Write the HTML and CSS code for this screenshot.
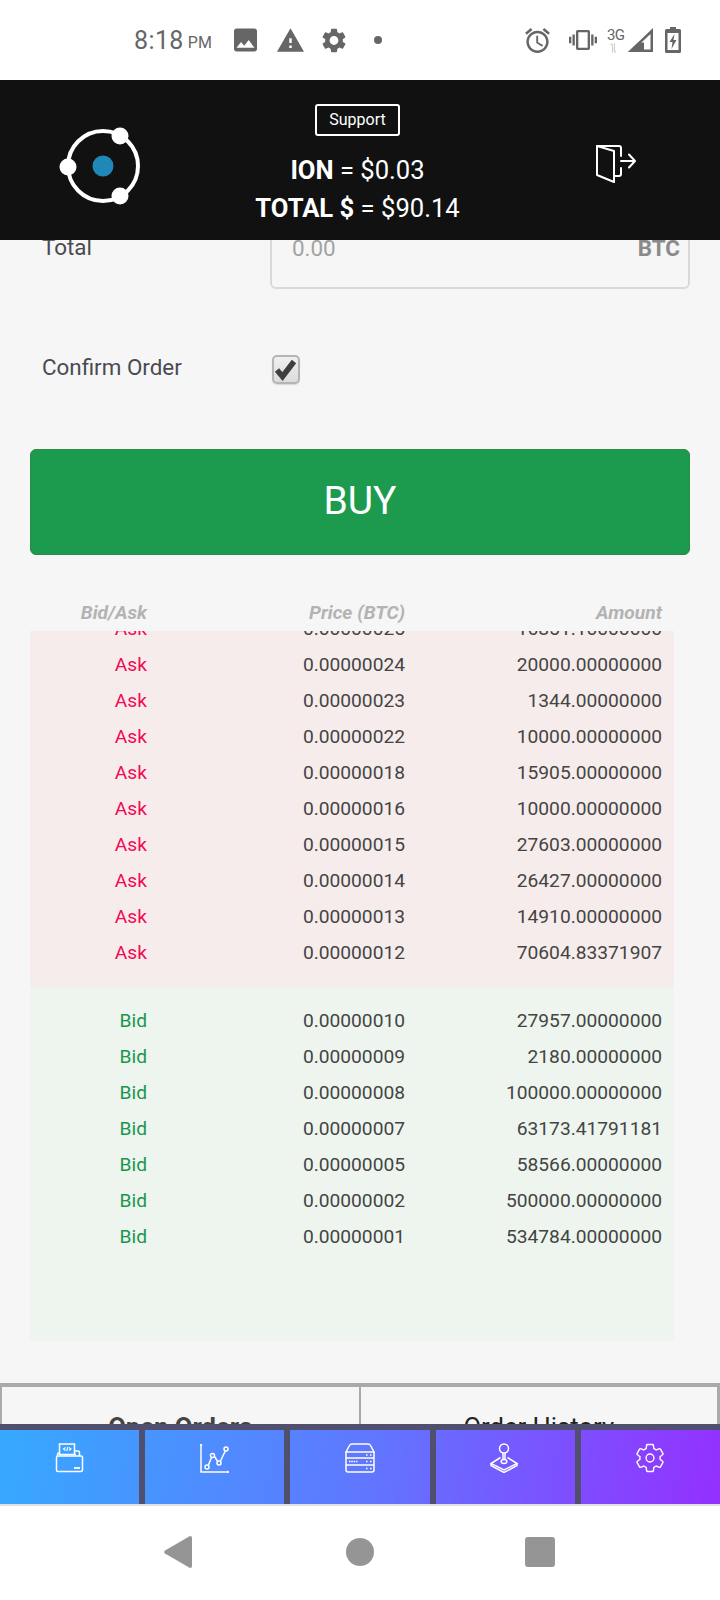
FILE: index.html
```html
<!DOCTYPE html>
<html lang="en">

<head>
    <meta charset="UTF-8" />
    <meta name="viewport" content="width=device-width, initial-scale=1.0" />
    <title>Exchange</title>
    <link rel="stylesheet" href="styles.css">
</head>

<body>
    <div id="status_bar">
        <span class="clock">8:18</span><span class="clock_suffix">PM</span>
        <svg class="st_image" viewBox="3 3 18 18"><path d="M21 19V5c0-1.100-.9-2-2-2H5c-1.100 0-2 .9-2 2v14c0 1.100.9 2 2 2h14c1.100 0 2-.9 2-2zM8.500 13.500l2.500 3.010L14.500 12l4.500 6H5l3.500-4.500z" fill-rule="evenodd"/></svg>
        <svg class="st_warn" viewBox="1 2 22 19"><path d="M1 21h22L12 2 1 21zm12-3h-2v-2h2v2zm0-4h-2v-4h2v4z"/></svg>
        <svg class="st_gear" viewBox="2.500 1.800 19 20.400"><path d="M19.140 12.940c.04-.3.06-.61.06-.94 0-.32-.02-.64-.07-.94l2.030-1.580c.18-.14.23-.41.12-.61l-1.920-3.320c-.12-.22-.37-.29-.59-.22l-2.390.96c-.5-.38-1.030-.7-1.620-.94l-.36-2.540c-.04-.24-.24-.41-.48-.41h-3.840c-.24 0-.43.17-.47.41l-.36 2.540c-.59.24-1.130.57-1.620.94l-2.390-.96c-.22-.08-.47 0-.59.22L2.740 8.870c-.12.21-.08.47.12.61l2.030 1.580c-.05.3-.09.63-.09.94s.02.64.07.94l-2.030 1.580c-.18.14-.23.41-.12.61l1.920 3.320c.12.22.37.29.59.22l2.390-.96c.5.38 1.030.7 1.620.94l.36 2.540c.05.24.24.41.48.41h3.840c.24 0 .44-.17.47-.41l.36-2.540c.59-.24 1.130-.56 1.620-.94l2.390.96c.22.08.47 0 .59-.22l1.920-3.320c.12-.22.07-.47-.12-.61l-2.010-1.580zM12 15.600c-1.980 0-3.600-1.620-3.600-3.600s1.620-3.600 3.600-3.600 3.600 1.620 3.600 3.600-1.620 3.600-3.600 3.600z"/></svg>
        <span class="st_dot"></span>
        <svg class="st_alarm" viewBox="2 1.800 20 20.200"><path d="M22 5.720l-4.600-3.860-1.290 1.530 4.600 3.860L22 5.720zM7.880 3.390L6.600 1.860 2 5.710l1.290 1.530 4.590-3.850zM12.500 8H11v6l4.750 2.850.75-1.230-4-2.370V8zM12 4c-4.970 0-9 4.030-9 9s4.030 9 9 9 9-4.030 9-9-4.030-9-9-9zm0 16c-3.870 0-7-3.130-7-7s3.130-7 7-7 7 3.130 7 7-3.130 7-7 7z"/></svg>
        <svg class="st_vibrate" viewBox="0 3 24 18" preserveAspectRatio="none"><path d="M0 15h2V9H0v6zm3 2h2V7H3v10zm19-8v6h2V9h-2zm-3 8h2V7h-2v10zM16.500 3h-9C6.670 3 6 3.670 6 4.500v15c0 .83.67 1.500 1.500 1.500h9c.83 0 1.500-.67 1.500-1.500v-15c0-.83-.67-1.500-1.500-1.500zM16 19H8V5h8v14z"/></svg>
        <span class="st_net">3G<svg viewBox="0 0 9 10"><path d="M1 2l1.500-2L4 2v8H3V2zM5 0h1v8l1.500 0L6 10 4.700 8z" fill="#cfcfcf"/></svg></span>
        <svg class="st_signal" viewBox="0 0 25 24"><path d="M25 0v24H0zM22.500 6L6 21.500h16.500z" fill-rule="evenodd"/><path d="M0 24l10-9.500h6V24z"/></svg>
        <svg class="st_battery" viewBox="0 0 16 26"><path d="M5 0h6v2h3.500A1.500 1.500 0 0 1 16 3.500v21a1.500 1.500 0 0 1-1.500 1.500h-13A1.500 1.500 0 0 1 0 24.500v-21A1.500 1.500 0 0 1 1.500 2H5z"/><path d="M2.500 6h11v17h-11z" fill="#fff"/><path d="M9.500 7L4.500 15h3l-1 7 5-9h-3z"/></svg>
    </div>

    <div id="top_bar">
        <svg class="logo" viewBox="0 0 90 80">
            <circle cx="45" cy="40" r="35" fill="none" stroke="#fff" stroke-width="4" />
            <circle cx="45" cy="40" r="10.500" fill="#2088b8" />
            <circle cx="10" cy="41" r="8.500" fill="#fff" />
            <circle cx="62" cy="10" r="8.500" fill="#fff" />
            <circle cx="62" cy="70" r="8.500" fill="#fff" />
        </svg>
        <div class="top_center">
            <div class="support">Support</div>
            <div class="rate"><b>ION</b> = $0.03</div>
            <div class="rate"><b>TOTAL $</b> = $90.14</div>
        </div>
        <svg class="logout" viewBox="0 0 40 40" fill="none" stroke="#fff" stroke-width="2" stroke-linejoin="round" stroke-linecap="round">
            <path d="M1 3h22a2 2 0 0 1 2 2v8M25 25v6a2 2 0 0 1-2 2h-5" />
            <path d="M1 3v29l17 7V8z" />
            <path d="M25 18h14M33 11.500L39 18l-6 6.500" />
        </svg>
    </div>

    <div id="main">
        <div class="form_row total_row">
            <label class="field_label">Total</label>
            <div class="field_box"><span class="placeholder">0.00</span><span class="unit">BTC</span></div>
        </div>

        <div class="form_row confirm_row">
            <label class="field_label">Confirm Order</label>
            <span class="check_box">
                <svg viewBox="0 0 24 25"><path d="M3 13l5.500 6.500L20 4.500" fill="none" stroke="#3f3f3f" stroke-width="5.500"/></svg>
            </span>
        </div>

        <button class="buy_btn">BUY</button>

        <div class="book_row book_head"><span>Bid/Ask</span><span>Price (BTC)</span><span>Amount</span></div>

        <div class="book ask_book">
            <div class="book_row clipped"><span class="ask">Ask</span><span>0.00000025</span><span>16851.10000000</span></div>
            <div class="book_row"><span class="ask">Ask</span><span>0.00000024</span><span>20000.00000000</span></div>
            <div class="book_row"><span class="ask">Ask</span><span>0.00000023</span><span>1344.00000000</span></div>
            <div class="book_row"><span class="ask">Ask</span><span>0.00000022</span><span>10000.00000000</span></div>
            <div class="book_row"><span class="ask">Ask</span><span>0.00000018</span><span>15905.00000000</span></div>
            <div class="book_row"><span class="ask">Ask</span><span>0.00000016</span><span>10000.00000000</span></div>
            <div class="book_row"><span class="ask">Ask</span><span>0.00000015</span><span>27603.00000000</span></div>
            <div class="book_row"><span class="ask">Ask</span><span>0.00000014</span><span>26427.00000000</span></div>
            <div class="book_row"><span class="ask">Ask</span><span>0.00000013</span><span>14910.00000000</span></div>
            <div class="book_row"><span class="ask">Ask</span><span>0.00000012</span><span>70604.83371907</span></div>
        </div>

        <div class="book bid_book">
            <div class="book_row"><span class="bid">Bid</span><span>0.00000010</span><span>27957.00000000</span></div>
            <div class="book_row"><span class="bid">Bid</span><span>0.00000009</span><span>2180.00000000</span></div>
            <div class="book_row"><span class="bid">Bid</span><span>0.00000008</span><span>100000.00000000</span></div>
            <div class="book_row"><span class="bid">Bid</span><span>0.00000007</span><span>63173.41791181</span></div>
            <div class="book_row"><span class="bid">Bid</span><span>0.00000005</span><span>58566.00000000</span></div>
            <div class="book_row"><span class="bid">Bid</span><span>0.00000002</span><span>500000.00000000</span></div>
            <div class="book_row"><span class="bid">Bid</span><span>0.00000001</span><span>534784.00000000</span></div>
        </div>

        <div class="tabs">
            <div class="tab tab_active">Open Orders</div>
            <div class="tab">Order History</div>
        </div>
    </div>

    <div id="bottom_nav">
        <div class="nav_item">
            <svg viewBox="0 0 30 30"><rect x="1.500" y="13" width="26" height="15.500" rx="1.500"/><path d="M2.500 13v-1.500A1.500 1.500 0 0 1 4 10M19.500 8h3.500a1.500 1.500 0 0 1 1.500 1.500V13"/><path d="M4.500 11.500V1h15v10.500M4 11.500h17"/><path d="M10.500 4.500L8.500 6l2 1.500M14 4.500L16 6l-2 1.500M12.800 4l-1 4" stroke-width="1.100"/><path d="M19 25h6" stroke-width="1.800"/></svg>
        </div>
        <div class="nav_item">
            <svg viewBox="0 0 30 30"><path d="M1 1v28h28"/><path d="M1 1L0 3M1 1l1 2M29 29l-2-1M29 29l-2 1" stroke-width="1"/><path d="M8 23l3.500-8.500M14.500 13.500l3.500 5.500M20.500 18l5-10.500"/><circle cx="7" cy="24" r="2"/><circle cx="12.500" cy="12.500" r="2"/><circle cx="19" cy="20" r="2"/><circle cx="26" cy="6" r="2"/></svg>
        </div>
        <div class="nav_item">
            <svg viewBox="0 0 30 30"><path d="M7 1h16a3 3 0 0 1 2.500 1.500L29 9H1l3.500-6.500A3 3 0 0 1 7 1z"/><path d="M1 9v18a2 2 0 0 0 2 2h24a2 2 0 0 0 2-2V9M1 15h28M1 22h28"/><path d="M21 12h2M25 12h2M4 18.500h9M21 18.500h2M25 18.500h2M21 25.500h2M25 25.500h2" stroke-dasharray="1.500 .8"/></svg>
        </div>
        <div class="nav_item">
            <svg viewBox="0 0 30 30"><circle cx="14" cy="5.500" r="4.500"/><path d="M13 10v7M15 10v7"/><ellipse cx="14" cy="18.500" rx="2.800" ry="2"/><path d="M10.500 14.500L1 20.500l13 6.500 13-6.500-9.500-6"/><path d="M1 20.500v2L14 29.500l13-7v-2"/></svg>
        </div>
        <div class="nav_item">
            <svg class="nav_gear" viewBox="2 1.300 20 21.400"><path d="M19.140 12.940c.04-.3.06-.61.06-.94 0-.32-.02-.64-.07-.94l2.030-1.580c.18-.14.23-.41.12-.61l-1.920-3.320c-.12-.22-.37-.29-.59-.22l-2.390.96c-.5-.38-1.030-.7-1.620-.94l-.36-2.540c-.04-.24-.24-.41-.48-.41h-3.840c-.24 0-.43.17-.47.41l-.36 2.540c-.59.24-1.130.57-1.620.94l-2.390-.96c-.22-.08-.47 0-.59.22L2.740 8.870c-.12.21-.08.47.12.61l2.030 1.580c-.05.3-.09.63-.09.94s.02.64.07.94l-2.030 1.580c-.18.14-.23.41-.12.61l1.920 3.320c.12.22.37.29.59.22l2.390-.96c.5.38 1.030.7 1.620.94l.36 2.540c.05.24.24.41.48.41h3.840c.24 0 .44-.17.47-.41l.36-2.540c.59-.24 1.130-.56 1.620-.94l2.390.96c.22.08.47 0 .59-.22l1.920-3.320c.12-.22.07-.47-.12-.61l-2.010-1.580z"/><circle cx="12" cy="12" r="2.800"/></svg>
        </div>
    </div>

    <div id="sys_nav">
        <svg class="sys_back" viewBox="0 0 28 32"><path d="M26 0a2 2 0 0 1 2 2v28a2 2 0 0 1-2 2L1 17.500a2 2 0 0 1 0-3z"/></svg>
        <span class="sys_home"></span>
        <span class="sys_recent"></span>
    </div>
</body>

</html>
```
FILE: styles.css
```css
* {
    box-sizing: border-box;
}

body {
    margin: 0;
    width: 720px;
    height: 1600px;
    overflow: hidden;
    display: flex;
    flex-direction: column;
    font-family: Roboto, "Liberation Sans", sans-serif;
    background-color: #ffffff;
}

/* android status bar */
#status_bar {
    height: 80px;
    flex: none;
    display: flex;
    align-items: center;
    padding-left: 134px;
    color: #666666;
    fill: #666666;
}

.clock {
    font-size: 25px;
    letter-spacing: 0.4px;
}

.clock_suffix {
    font-size: 16px;
    margin: 5px 0 0 4px;
}

#status_bar svg {
    display: block;
    flex: none;
}

.st_image {
    width: 23px;
    height: 24px;
    margin-left: 22px;
}

.st_warn {
    width: 27px;
    height: 24px;
    margin-left: 20px;
}

.st_gear {
    width: 24px;
    height: 25px;
    margin-left: 18px;
}

.st_dot {
    width: 8px;
    height: 8px;
    border-radius: 50%;
    background-color: #666666;
    margin-left: 28px;
}

.st_alarm {
    width: 25px;
    height: 25px;
    margin-left: 143px;
}

.st_vibrate {
    width: 28px;
    height: 20px;
    margin-left: 19px;
}

.st_net {
    width: 20px;
    margin-left: 10px;
    font-size: 15px;
    line-height: 13px;
    letter-spacing: -0.5px;
    margin-top: 1px;
}

#status_bar .st_net svg {
    width: 9px;
    height: 10px;
    margin: 1px 0 0 2px;
}

.st_signal {
    width: 25px;
    height: 24px;
    margin-left: 1px;
}

.st_battery {
    width: 16px;
    height: 26px;
    margin-left: 12px;
}

/* black header */
#top_bar {
    height: 160px;
    flex: none;
    position: relative;
    display: flex;
    justify-content: center;
    background-color: #111111;
    color: #ffffff;
    z-index: 2;
}

.logo {
    position: absolute;
    left: 58px;
    top: 46px;
    width: 90px;
    height: 80px;
}

.logout {
    position: absolute;
    left: 596px;
    top: 63px;
    width: 40px;
    height: 40px;
}

.top_center {
    display: flex;
    flex-direction: column;
    align-items: center;
    padding-top: 24px;
    margin-left: -5px;
}

.support {
    width: 85px;
    height: 32px;
    border: 2px solid #ffffff;
    border-radius: 3px;
    font-size: 16px;
    line-height: 28px;
    text-align: center;
    margin-bottom: 15px;
}

.rate {
    font-size: 25.600px;
    line-height: 38px;
    white-space: nowrap;
}

/* scrolled page content */
#main {
    flex: 1;
    min-height: 0;
    overflow: hidden;
    background-color: #f6f6f6;
}

.form_row {
    display: flex;
    align-items: center;
    padding: 0 30px 0 42px;
}

.total_row {
    margin-top: -21px;
    align-items: flex-start;
}

.field_label {
    width: 228px;
    flex: none;
    font-size: 22.400px;
    line-height: 25px;
    color: #4a4a52;
}

.total_row .field_label {
    padding-top: 16px;
}

.confirm_row .field_label {
    padding-bottom: 4px;
}

.field_box {
    flex: 1;
    height: 70px;
    display: flex;
    justify-content: space-between;
    padding: 14px 8px 0 20px;
    border: 2px solid #d9d9d9;
    border-radius: 6px;
    font-size: 22.400px;
}

.placeholder {
    color: #a3a3a3;
}

.unit {
    color: #8a8a8a;
    font-weight: 700;
}

.confirm_row {
    margin-top: 66px;
}

.check_box {
    width: 28px;
    height: 29px;
    margin-left: 2px;
    background-image: linear-gradient(#f0f0f0, #dcdcdc);
    border: 2px solid #b5b5b5;
    border-radius: 5px;
    box-shadow: 0 1px 1px #d8d8d8;
}

.check_box svg {
    display: block;
    width: 100%;
    height: 100%;
}

.buy_btn {
    display: block;
    width: 660px;
    height: 106px;
    margin: 65px 30px 0;
    padding: 0 0 2px;
    border: 1px solid #2b8a45;
    border-radius: 6px;
    background-color: #1c9a4e;
    color: #ffffff;
    font-family: inherit;
    font-size: 39px;
}

/* order book */
.book_row {
    display: grid;
    grid-template-columns: 117px 258px 257px;
    height: 36px;
    line-height: 36px;
    font-size: 19.200px;
    color: #444444;
    text-align: right;
    white-space: nowrap;
}

.book_head {
    height: 32px;
    line-height: 28px;
    margin: 44px 30px 0;
    font-weight: 700;
    font-style: italic;
    color: #b3b3b3;
}

.book {
    margin: 0 46px 0 30px;
    overflow: hidden;
}

.ask_book {
    height: 356px;
    background-color: #f6eceb;
}

.clipped {
    margin-top: -20px;
}

.bid_book {
    height: 354px;
    padding-top: 16px;
    background-color: #edf5ee;
}

.ask {
    color: #f10a55;
}

.bid {
    color: #1a9650;
}

/* tabs cut off by the bottom nav */
.tabs {
    display: flex;
    margin-top: 42px;
    border-top: 4px solid #aaaaaa;
    height: 70px;
}

.tab {
    flex: 1;
    padding-top: 25px;
    text-align: center;
    font-size: 25.600px;
    color: #222222;
}

.tab_active {
    font-weight: 700;
    color: #444444;
    border-left: 2px solid #aaaaaa;
    border-right: 2px solid #aaaaaa;
}

.tab:last-child {
    border-right: 3px solid #aaaaaa;
}

/* purple bottom nav */
#bottom_nav {
    height: 82px;
    flex: none;
    display: flex;
    border-top: 6px solid #50506e;
    border-bottom: 2px solid #e0e0e0;
    background-image: linear-gradient(100deg, #36a9ff, #5f78ff 50%, #9430ff);
}

.nav_item {
    flex: 1;
    display: flex;
    justify-content: center;
    padding-top: 13px;
    border-left: 6px solid #50506e;
}

.nav_item:first-child {
    flex: none;
    width: 139px;
    border-left: 0;
}

.nav_item svg {
    width: 30px;
    height: 30px;
    fill: none;
    stroke: #ffffff;
    stroke-width: 1.500;
}

.nav_item .nav_gear {
    stroke-width: 1;
}

/* android navigation */
#sys_nav {
    height: 94px;
    flex: none;
    display: flex;
    align-items: center;
    padding: 0 0 2px 164px;
    fill: #959595;
}

.sys_back {
    width: 28px;
    height: 32px;
}

.sys_home {
    width: 28px;
    height: 28px;
    margin-left: 154px;
    border-radius: 50%;
    background-color: #959595;
}

.sys_recent {
    width: 30px;
    height: 30px;
    margin-left: 151px;
    border-radius: 3px;
    background-color: #959595;
}
```
